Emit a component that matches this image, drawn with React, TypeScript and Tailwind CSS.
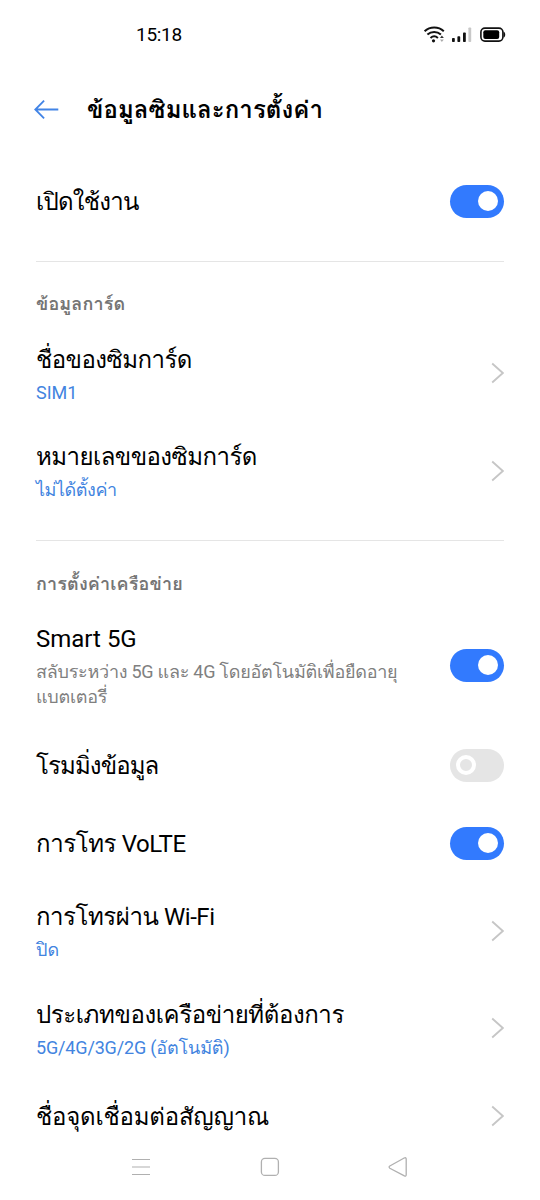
import React from "react";
import clsx from "clsx";

interface RowProps {
  title: string;
  children?: React.ReactNode;
  className: string;
  subtitle?: string;
  titleClass?: string;
  subtitleClass?: string;
}

function Chevron() {
  return (
    <svg className="w-[13px] h-6 shrink-0" viewBox="0 0 13 24" fill="none" stroke="#c6c6c6" strokeWidth={1.8}>
      <path d="M1.2 2.5L11.8 12L1.2 21.5" />
    </svg>
  );
}

function Toggle({ on = false }: { on?: boolean }) {
  return (
    <span
      className={clsx(
        "flex items-center w-[54px] h-[33px] px-1.5 rounded-full shrink-0",
        on ? "justify-end bg-[#327afe]" : "bg-[#e5e5e5]"
      )}
    >
      <span className={clsx("size-5 rounded-full", on ? "bg-white" : "border-4 border-white")} />
    </span>
  );
}

function Row({ title, subtitle, className, titleClass, subtitleClass, children }: RowProps) {
  return (
    <div className={clsx("flex items-center justify-between", className)}>
      <div className="whitespace-nowrap">
        <div className={clsx("text-[24px] leading-9", !subtitle && "pt-0.5", titleClass ?? "tracking-[-0.55px]")}>
          {title}
        </div>
        {subtitle && (
          <div className={clsx("text-[18px] leading-[25px] whitespace-pre-line", subtitleClass ?? "mt-0.5 text-[#4284e0]")}>
            {subtitle}
          </div>
        )}
      </div>
      {children}
    </div>
  );
}

export default function App() {
  return (
    <div className="flex flex-col w-[540px] h-[1200px] overflow-hidden bg-white text-black font-[Roboto,Loma,sans-serif]">
      {/* Status bar */}
      <div className="flex items-center justify-between h-[68px] pl-[136px] pr-[34px]">
        <span className="pt-0.5 text-[19px] tracking-[-0.3px]">15:18</span>
        <svg className="w-[84px] h-5" viewBox="0 0 84 20" fill="none">
          {/* Wi-Fi */}
          <g stroke="#111" strokeWidth={2}>
            <path d="M2.6 7.2C8 2.2 16.5 2.2 21.8 7.2" />
            <path d="M5.4 10.6C9.3 7 15 7 18.9 10.6" />
            <path d="M8.5 13.9C10.7 11.9 13.7 11.9 15.9 13.9" />
          </g>
          <circle cx="11.5" cy="16.8" r="1.6" fill="#111" />
          <path d="M18 14L19.9 11.4L21.8 14Z" fill="#333" />
          <path d="M18 15.6L19.9 18L21.8 15.6Z" fill="#aaa" />
          {/* Signal */}
          <rect x="30" y="14" width="2.8" height="4" rx="0.8" fill="#111" />
          <rect x="35.4" y="12.2" width="2.8" height="5.8" rx="0.8" fill="#111" />
          <rect x="41" y="8.4" width="2.8" height="9.6" rx="0.8" fill="#111" />
          <rect x="46.4" y="3.4" width="2.8" height="14.6" rx="0.8" fill="#c8c8c8" />
          {/* Battery */}
          <rect x="58.9" y="4.1" width="22" height="13" rx="4" stroke="#111" strokeWidth={1.6} />
          <rect x="61.3" y="6.2" width="15.9" height="8.8" rx="2" fill="#000" />
          <path d="M81.5 7.5C83.8 8.5 83.8 12.7 81.5 13.7Z" fill="#111" />
        </svg>
      </div>

      {/* Title bar */}
      <header className="flex items-center h-[84px] pl-[34px] gap-7">
        <svg className="w-[25px] h-5" viewBox="0 0 25 20" fill="none" stroke="#4284e6" strokeWidth={1.8}>
          <path d="M24.3 9.5H1.3M10.1 0.7L1.3 9.5L10.1 18.3" />
        </svg>
        <h1 className="text-[24px] font-bold tracking-[0.07px] whitespace-nowrap">ข้อมูลซิมและการตั้งค่า</h1>
      </header>

      <main className="px-9">
        <Row title="เปิดใช้งาน" className="h-[98px] mb-[11px]" titleClass="tracking-[-0.75px]">
          <Toggle on />
        </Row>

        <h2 className="h-[63px] pt-[29px] border-t border-[#e5e5e5] text-[18px] leading-[26px] font-bold tracking-[0.12px] text-[#757575]">
          ข้อมูลการ์ด
        </h2>
        <Row title="ชื่อของซิมการ์ด" subtitle="SIM1" className="h-[98px]">
          <Chevron />
        </Row>
        <Row
          title="หมายเลขของซิมการ์ด"
          subtitle="ไม่ได้ตั้งค่า"
          className="h-[97px] mb-[21px]"
          subtitleClass="mt-0.5 text-[#4284e0] tracking-[-0.45px]"
        >
          <Chevron />
        </Row>

        <h2 className="h-[64px] pt-[30px] border-t border-[#e5e5e5] text-[18px] leading-[26px] font-bold tracking-[0.14px] text-[#757575]">
          การตั้งค่าเครือข่าย
        </h2>
        <Row
          title="Smart 5G"
          subtitle={"สลับระหว่าง 5G และ 4G โดยอัตโนมัติเพื่อยืดอายุ\nแบตเตอรี่"}
          className="h-[122px]"
          titleClass="tracking-normal"
          subtitleClass="mt-0.5 text-[#808080] tracking-[-0.26px]"
        >
          <Toggle on />
        </Row>
        <Row title="โรมมิ่งข้อมูล" className="h-[78px]" titleClass="tracking-[-0.9px]">
          <Toggle />
        </Row>
        <Row title="การโทร VoLTE" className="h-[78px]" titleClass="tracking-[-0.4px]">
          <Toggle on />
        </Row>
        <Row title="การโทรผ่าน Wi-Fi" subtitle="ปิด" className="h-[97px]" titleClass="tracking-[-0.45px]">
          <Chevron />
        </Row>
        <Row
          title="ประเภทของเครือข่ายที่ต้องการ"
          subtitle="5G/4G/3G/2G (อัตโนมัติ)"
          className="h-[98px]"
          titleClass="tracking-[-0.41px]"
          subtitleClass="mt-0.5 text-[#4284e0] tracking-[-0.16px]"
        >
          <Chevron />
        </Row>
        <Row title="ชื่อจุดเชื่อมต่อสัญญาณ" className="h-[78px]" titleClass="tracking-[-0.22px]">
          <Chevron />
        </Row>
      </main>

      {/* System navigation */}
      <nav className="flex justify-between w-full pl-[131px] pr-[132px] pt-0.5">
        <svg className="size-5" viewBox="0 0 20 20" fill="none" stroke="#b0b0b0" strokeWidth={1.2}>
          <path d="M1 2.5H19M1 10H19M1 17.5H19" />
        </svg>
        <svg className="size-5" viewBox="0 0 20 20" fill="none" stroke="#b0b0b0" strokeWidth={1.3}>
          <rect x="1.4" y="1.4" width="17" height="17" rx="3.5" />
        </svg>
        <svg className="size-5" viewBox="0 0 20 20" fill="none" stroke="#b0b0b0" strokeWidth={1.3} strokeLinejoin="round">
          <path d="M1.8 9L16.2 1Q18.2 0.2 18.2 2V17.8Q18.2 19.6 16.4 18.9L1.8 11.2Q0.4 10.1 1.8 9Z" />
        </svg>
      </nav>
    </div>
  );
}
